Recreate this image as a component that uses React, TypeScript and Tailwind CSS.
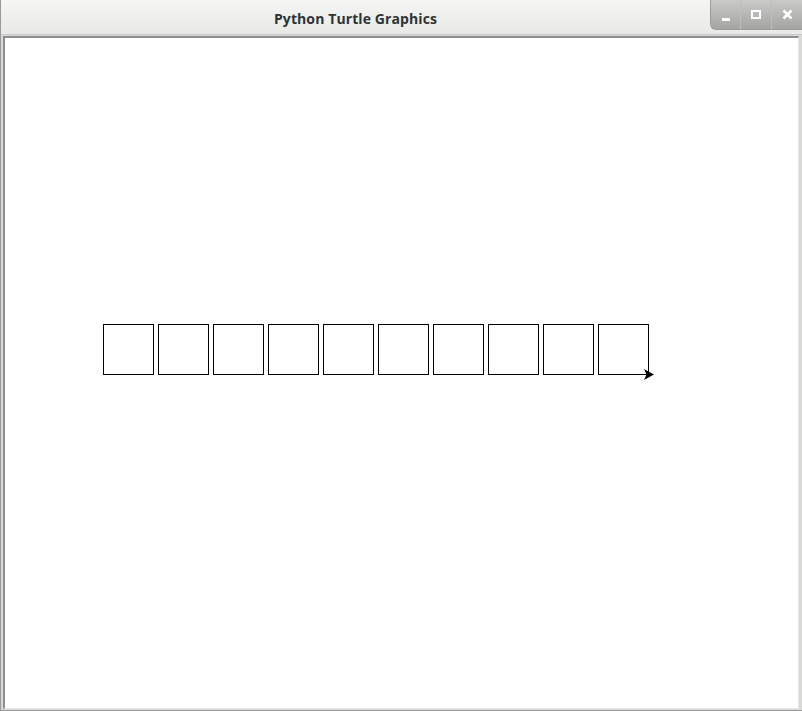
import React from "react";

// turtle drew 10 squares of side 50, stepping 55 each time
const squares = Array.from({ length: 10 }, (_, i) => 98 + i * 55);

const TurtleCanvas = () => (
  <svg width="792" height="668" className="block">
    {squares.map((x) => (
      <rect key={x} x={x + 0.5} y={286.5} width={50} height={50} fill="none" stroke="#000" strokeWidth={1} />
    ))}
    <line x1={643} y1={336.5} x2={646} y2={336.5} stroke="#000" />
    <polygon points="649,336.5 639,331 641.5,336.5 639,342" fill="#000" />
  </svg>
);

const App = () => {
  return (
    <div
      className="w-[802px] h-[711px] flex flex-col bg-[#d9d9d8] border-l border-b border-[#9a9a9a] overflow-hidden"
      style={{ fontFamily: '"Open Sans", "DejaVu Sans", sans-serif' }}
    >
      {/* Title bar */}
      <div className="h-[35px] shrink-0 bg-gradient-to-b from-[#f5f5f4] to-[#e9e9e8] border-b border-[#c9c9c8] flex">
        <div className="flex-1 flex items-center justify-center">
          <span className="text-[14px] font-bold text-[#2e3436] tracking-[0.1px] mt-[2px]">Python Turtle Graphics</span>
        </div>
        <div className="self-start h-[30px] flex rounded-bl-[6px] overflow-hidden bg-gradient-to-b from-[#cacac8] to-[#a4a4a2] border-l border-b border-[#9c9c9a]">
          <div className="w-[30px] flex items-center justify-center border-r border-[#bdbdbb]">
            <div className="w-[8px] h-[3px] bg-white mt-[9px]" />
          </div>
          <div className="w-[31px] flex items-center justify-center border-r border-[#bdbdbb]">
            <div className="w-[10px] h-[9px] border-2 border-white" />
          </div>
          <div className="w-[30px] flex items-center justify-center">
            <svg width="11" height="11" viewBox="0 0 11 11">
              <path d="M1.5 1.5 L9.5 9.5 M9.5 1.5 L1.5 9.5" stroke="#fff" strokeWidth="2.6" />
            </svg>
          </div>
        </div>
      </div>

      {/* Frame around canvas */}
      <div className="flex-1 pl-[2px] pr-[3px] pt-[1px] pb-[1px]">
        <div className="w-full h-full border-t-2 border-l-2 border-r border-b border-t-[#8e8e8e] border-l-[#8e8e8e] border-r-[#e6e6e6] border-b-[#e6e6e6] bg-white">
          <TurtleCanvas />
        </div>
      </div>
    </div>
  );
};

export default App;
